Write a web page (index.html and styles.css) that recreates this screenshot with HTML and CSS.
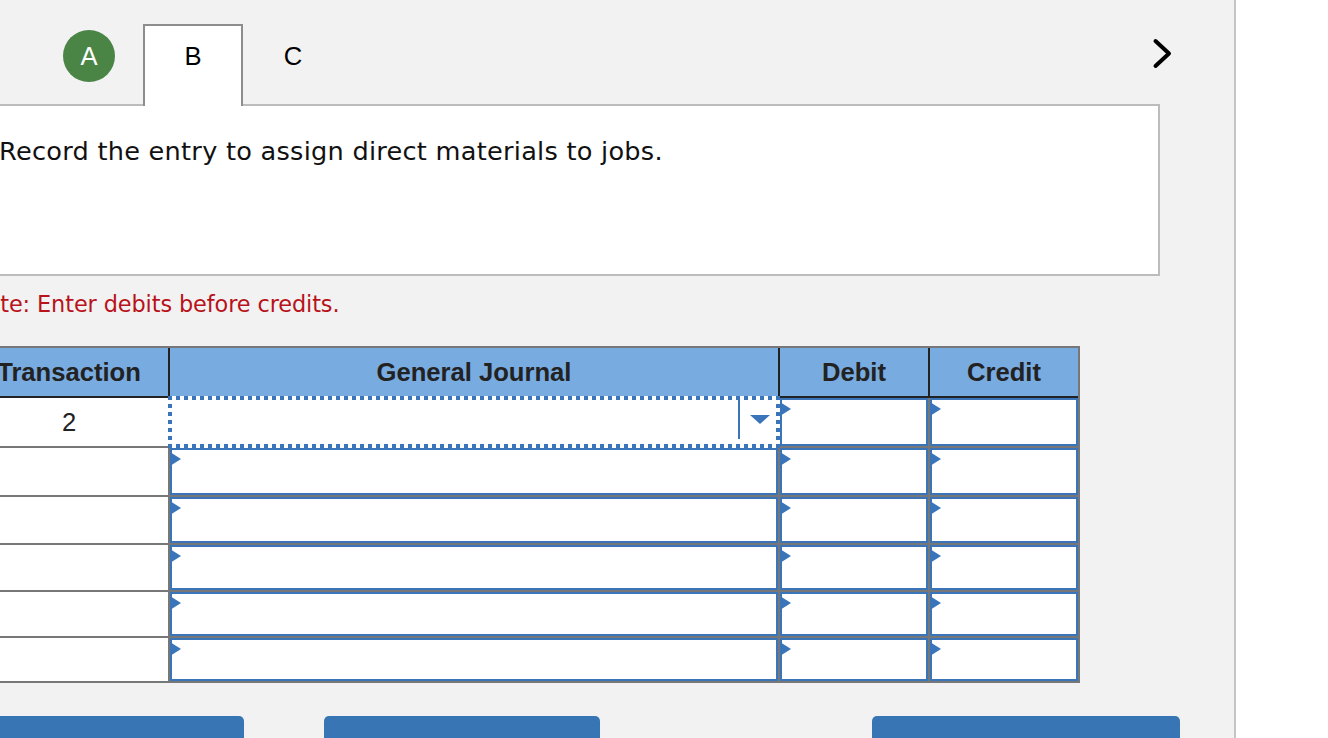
FILE: index.html
```html
<!DOCTYPE html>
<html lang="en">
<head>
<meta charset="utf-8">
<title>Journal entry</title>
<link rel="stylesheet" href="styles.css">
</head>
<body>
<div class="main">
  <div class="tabs">
    <div class="tab tab-done"><span class="badge">A</span></div>
    <div class="tab tab-active">B</div>
    <div class="tab">C</div>
    <div class="next">
      <svg width="40" height="40" viewBox="0 0 40 40"><polyline points="13.5,7 27,19.5 13.5,32" fill="none" stroke="#000" stroke-width="4" stroke-linecap="round" stroke-linejoin="round"/></svg>
    </div>
  </div>
  <div class="qbox">
    <p class="prompt">Record the entry to assign direct materials to jobs.</p>
  </div>
  <p class="note">Note: Enter debits before credits.</p>

  <div class="journal">
    <div class="jhead">
      <div class="th">Transaction</div>
      <div class="th">General Journal</div>
      <div class="th">Debit</div>
      <div class="th">Credit</div>
    </div>
    <div class="jbody">
      <div class="tc">2</div>
      <div class="focus"><div class="dd"><span class="caret"></span></div></div>
      <div class="inp"></div>
      <div class="inp"></div>

      <div class="tc"></div>
      <div class="inp"></div>
      <div class="inp"></div>
      <div class="inp"></div>

      <div class="tc"></div>
      <div class="inp"></div>
      <div class="inp"></div>
      <div class="inp"></div>

      <div class="tc"></div>
      <div class="inp"></div>
      <div class="inp"></div>
      <div class="inp"></div>

      <div class="tc"></div>
      <div class="inp"></div>
      <div class="inp"></div>
      <div class="inp"></div>

      <div class="tc"></div>
      <div class="inp"></div>
      <div class="inp"></div>
      <div class="inp"></div>
    </div>
  </div>

  <div class="buttons">
    <div class="btn btn-prev"></div>
    <div class="btn btn-mid"></div>
    <div class="btn btn-next"></div>
  </div>
</div>
</body>
</html>
```
FILE: styles.css
```css
html, body {
  margin: 0;
  padding: 0;
  background: #ffffff;
  overflow: hidden;
}
body {
  font-family: "DejaVu Sans", Verdana, sans-serif;
  color: #000;
}
.main {
  margin-left: -32px;
  width: 1268px;
  height: 800px;
  background: #f2f2f2;
  border-right: 2px solid #c4c4c4;
  padding-top: 24px;
  box-sizing: border-box;
}

/* tabs */
.tabs {
  display: flex;
  height: 80px;
  padding-left: 71px;
  position: relative;
  z-index: 2;
}
.tab {
  width: 100px;
  height: 82px;
  box-sizing: border-box;
  border: 2px solid transparent;
  border-bottom: none;
  padding-bottom: 20px;
  display: flex;
  align-items: center;
  justify-content: center;
  font-family: "Liberation Sans", Arial, sans-serif;
  font-size: 25.6px;
  color: #000;
}
.tab-active {
  margin-left: 4px;
  background: #ffffff;
  border-color: #8d8d8d;
}
.badge {
  width: 52px;
  height: 52px;
  border-radius: 50%;
  background: #4a8546;
  color: #fff;
  display: flex;
  align-items: center;
  justify-content: center;
}
.next {
  margin-left: auto;
  margin-right: 52px;
  margin-top: 10px;
  width: 40px;
  height: 40px;
}
.next svg { display: block; }

/* question box */
.qbox {
  width: 1192px;
  height: 172px;
  box-sizing: border-box;
  background: #ffffff;
  border: 2px solid #bcbcbc;
  padding: 30px 29px;
}
.prompt {
  margin: 0;
  font-size: 25.6px;
  line-height: 30px;
  letter-spacing: 0.26px;
  color: #111;
}
.note {
  margin: 15px 0 0 0;
  padding-left: 2px;
  font-size: 22.4px;
  line-height: 26px;
  letter-spacing: -0.1px;
  color: #b8121b;
}

/* journal */
.journal {
  margin-top: 29px;
  width: 1112px;
  box-sizing: border-box;
  border: 2px solid #777777;
  background: #777777;
}
.jhead {
  display: grid;
  grid-template-columns: 198px 608px 148px 148px;
  column-gap: 2px;
  background: #222222;
  padding-bottom: 2px;
}
.th {
  height: 48px;
  background: #78abe0;
  display: flex;
  align-items: center;
  justify-content: center;
  font-family: "Liberation Sans", Arial, sans-serif;
  font-weight: bold;
  font-size: 25.6px;
  color: #222222;
}
.jbody {
  display: grid;
  grid-template-columns: 198px 608px 148px 148px;
  grid-template-rows: 48px 47px 46px 45px 44px 43px;
  gap: 2px;
}
.tc {
  background: #ffffff;
  display: flex;
  align-items: center;
  justify-content: center;
  font-family: "Liberation Sans", Arial, sans-serif;
  font-size: 25.6px;
  color: #222222;
}
.inp {
  background: #ffffff;
  border: 2px solid #3a75ba;
  position: relative;
}
.inp::before {
  content: "";
  position: absolute;
  left: -2px;
  top: 2px;
  border-top: 7px solid transparent;
  border-bottom: 7px solid transparent;
  border-left: 11px solid #3a75ba;
}
.focus {
  margin: -2px;
  position: relative;
  z-index: 1;
  background:
    repeating-linear-gradient(90deg, #3a75ba 0 4px, transparent 4px 8px) left top / 100% 4px no-repeat,
    repeating-linear-gradient(90deg, #3a75ba 0 4px, transparent 4px 8px) left bottom / 100% 4px no-repeat,
    repeating-linear-gradient(180deg, #3a75ba 0 4px, transparent 4px 8px) left top / 4px 100% no-repeat,
    repeating-linear-gradient(180deg, #3a75ba 0 4px, transparent 4px 8px) right top / 4px 100% no-repeat,
    #ffffff;
  display: flex;
  justify-content: flex-end;
  align-items: flex-start;
}
.dd {
  margin-top: 4px;
  height: 39px;
  width: 40px;
  border-left: 2px solid #3a75ba;
  display: flex;
  align-items: center;
  justify-content: center;
}
.caret {
  width: 0;
  height: 0;
  border-left: 10px solid transparent;
  border-right: 10px solid transparent;
  border-top: 9px solid #3a75ba;
}

/* bottom buttons */
.buttons {
  display: flex;
  margin-top: 33px;
}
.btn {
  height: 50px;
  background: #3875b4;
  border-radius: 5px;
}
.btn-prev { width: 276px; }
.btn-mid { width: 276px; margin-left: 80px; }
.btn-next { width: 308px; margin-left: 272px; }
```
